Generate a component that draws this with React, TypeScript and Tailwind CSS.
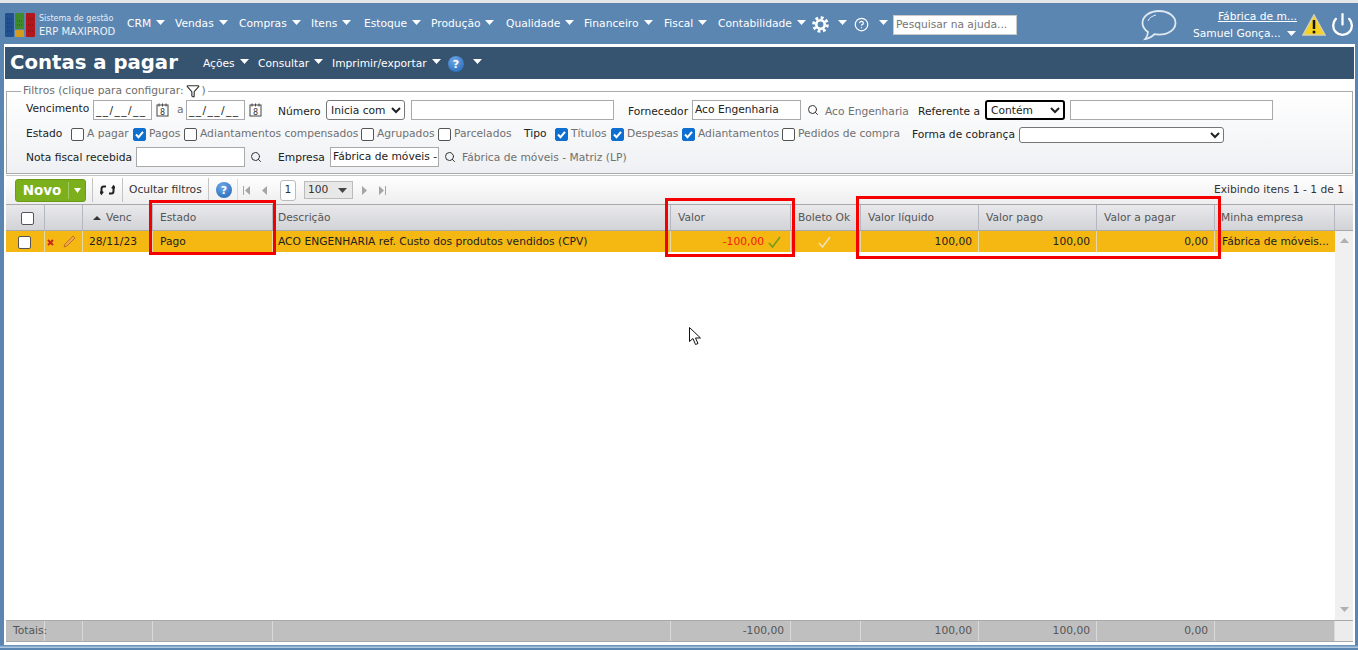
import { CircleHelp, Filter, Power, Search } from 'lucide-react'

const menus = [
  { label: 'CRM', w: 'w-[48px]' },
  { label: 'Vendas', w: 'w-[64px]' },
  { label: 'Compras', w: 'w-[72px]' },
  { label: 'Itens', w: 'w-[53px]' },
  { label: 'Estoque', w: 'w-[67px]' },
  { label: 'Produção', w: 'w-[75px]' },
  { label: 'Qualidade', w: 'w-[78px]' },
  { label: 'Financeiro', w: 'w-[80px]' },
  { label: 'Fiscal', w: 'w-[54px]' },
  { label: 'Contabilidade', w: 'w-[94px]' },
]

const columns = [
  { label: '', w: 'w-[39px]' },
  { label: '', w: 'w-[38px]' },
  { label: 'Venc', w: 'w-[70px]' },
  { label: 'Estado', w: 'w-[120px]' },
  { label: 'Descrição', w: 'w-[398px]' },
  { label: 'Valor', w: 'w-[120px]' },
  { label: 'Boleto Ok', w: 'w-[70px]' },
  { label: 'Valor líquido', w: 'w-[118px]' },
  { label: 'Valor pago', w: 'w-[118px]' },
  { label: 'Valor a pagar', w: 'w-[118px]' },
  { label: 'Minha empresa', w: 'w-[120px]' },
]

function Caret({ className = 'ml-[5px] -mt-[4px]' }: { className?: string }) {
  return (
    <svg width="9" height="5" viewBox="0 0 9 5" className={`shrink-0 ${className}`}>
      <polygon points="0,0 9,0 4.5,5" fill="#fff" />
    </svg>
  )
}

function CalendarIcon() {
  return (
    <svg width="13" height="14" viewBox="0 0 13 14" className="shrink-0">
      <rect x="1" y="2" width="11" height="11" fill="#fff" stroke="#444" />
      <path d="M3 0.5v3M6.5 0.5v3M10 0.5v3" stroke="#444" />
      <text x="6.5" y="11.5" fontSize="8" textAnchor="middle" fill="#333" fontFamily="DejaVu Sans">8</text>
    </svg>
  )
}

function Check({ checked, label, w }: { checked?: boolean; label: string; w: string }) {
  return (
    <label className={`flex items-center shrink-0 ${w}`}>
      <span className={`flex items-center justify-center w-[13px] h-[13px] rounded-[2px] shrink-0 border ${checked ? 'bg-[#0f6fd1] border-[#0f6fd1]' : 'bg-white border-[#555]'}`}>
        {checked && (
          <svg width="11" height="11" viewBox="0 0 11 11">
            <path d="M2 5.5 4.5 8.2 9 2.8" fill="none" stroke="#fff" strokeWidth="2" />
          </svg>
        )}
      </span>
      <span className="ml-[3px] text-[#707070] whitespace-nowrap">{label}</span>
    </label>
  )
}

function Lens({ className = '' }: { className?: string }) {
  return <Search size={12} strokeWidth={2} className={`shrink-0 text-[#333] ${className}`} />
}

function Logo() {
  return (
    <svg width="30" height="24" viewBox="0 0 30 24" className="shrink-0">
      <rect x="0" y="0" width="9" height="24" rx="1" fill="#23508f" />
      <rect x="10" y="0" width="9" height="16" rx="1" fill="#3f8a2b" />
      <rect x="10" y="17" width="9" height="7" rx="1" fill="#d39a1d" />
      <rect x="21" y="0" width="9" height="24" rx="1" fill="#b3171b" />
      <path d="M2 6h5M2 10h5M2 14h5M2 18h5M12 8h5M12 12h5M23 6h5M23 12h5M23 18h5" stroke="#000" strokeOpacity=".3" strokeWidth="1" strokeDasharray="1 1" />
    </svg>
  )
}

function GearIcon() {
  return (
    <svg width="17" height="17" viewBox="0 0 17 17" fill="none" stroke="#fff" className="shrink-0">
      <circle cx="8.5" cy="8.5" r="4.2" strokeWidth="2.600" />
      <circle cx="8.5" cy="8.5" r="6.800" strokeWidth="3" strokeDasharray="2.800 2.540" />
    </svg>
  )
}

function HelpBall() {
  return (
    <span className="flex items-center justify-center w-[16px] h-[16px] rounded-full shrink-0 bg-[radial-gradient(circle_at_40%_30%,#6fa8e8,#1c62b3)] text-white font-bold text-[11px] leading-none">?</span>
  )
}

function PagerArrow({ dir, bar }: { dir: 'l' | 'r'; bar?: boolean }) {
  return (
    <svg width="8" height="9" viewBox="0 0 8 9" className="shrink-0">
      {dir === 'l' ? <polygon points="7,0 7,9 2,4.5" fill="#a5a5a5" /> : <polygon points="1,0 1,9 6,4.5" fill="#a5a5a5" />}
      {bar && <rect x={dir === 'l' ? 0 : 7} y="0" width="1" height="9" fill="#a5a5a5" />}
    </svg>
  )
}

function TopBar() {
  return (
    <div className="flex items-center h-[41px] pl-[5px] pr-[5px] pt-[2px] shrink-0">
      <Logo />
      <div className="ml-[4px] w-[88px] shrink-0 leading-[13px] whitespace-nowrap">
        <div className="text-[8px] text-[#e8eef5]">Sistema de gestão</div>
        <div className="text-[10px] text-[#eef3f8]">ERP MAXIPROD</div>
      </div>
      {menus.map((m) => (
        <div key={m.label} className={`flex items-center shrink-0 ${m.w} text-white`}>
          <span className="whitespace-nowrap">{m.label}</span>
          <Caret />
        </div>
      ))}
      <GearIcon />
      <Caret className="ml-[9px] -mt-[5px]" />
      <CircleHelp size={15} className="text-white shrink-0 ml-[7px]" />
      <Caret className="ml-[10px] -mt-[5px]" />
      <div className="ml-[5px] w-[124px] h-[20px] shrink-0 bg-white border border-[#c9c9c9] px-[2px] leading-[18px] text-[#757575] whitespace-nowrap">Pesquisar na ajuda...</div>
      <svg width="36" height="32" viewBox="0 0 36 32" fill="none" stroke="#dfe8f1" strokeWidth="1.8" className="ml-[124px] shrink-0">
        <path d="M18 2C8.5 2 1.5 7.5 1.5 14c0 3.6 2.2 6.8 5.5 9-.2 2.4-1 5-2.8 7 3.6-.4 7-2.4 9.200-4.800 1.400.3 3 .4 4.600.4 9.500 0 16.500-5.100 16.500-11.600S27.500 2 18 2Z" />
        <path d="M7 12c1-3 4-5 8-6" strokeWidth="1" />
      </svg>
      <div className="ml-[16px] w-[105px] shrink-0 text-white leading-[17px] text-right">
        <div className="underline pr-[1px] whitespace-nowrap">Fábrica de m...</div>
        <div className="flex items-center whitespace-nowrap">
          <span>Samuel Gonça...</span>
          <Caret className="ml-[6px]" />
        </div>
      </div>
      <svg width="24" height="22" viewBox="0 0 24 22" className="ml-[4px] shrink-0">
        <polygon points="12,1 23,21 1,21" fill="#f4d21f" stroke="#d8d0b0" strokeWidth="1.500" />
        <path d="M12 6v9" stroke="#111" strokeWidth="2.500" />
        <circle cx="12" cy="18" r="1.500" fill="#111" />
      </svg>
      <Power size={25} strokeWidth={2.2} className="text-white shrink-0 ml-[4px]" />
    </div>
  )
}

function TitleBar() {
  return (
    <div className="flex items-center h-[32px] bg-[#36536f] shrink-0 text-white pl-[5px] pt-[2px]">
      <span className="w-[193px] shrink-0 text-[19.7px] font-bold whitespace-nowrap -mt-[3px]">Contas a pagar</span>
      <div className="flex items-center w-[55px] shrink-0"><span>Ações</span><Caret /></div>
      <div className="flex items-center w-[74px] shrink-0"><span>Consultar</span><Caret /></div>
      <div className="flex items-center w-[116px] shrink-0 whitespace-nowrap"><span>Imprimir/exportar</span><Caret /></div>
      <HelpBall />
      <Caret className="ml-[9px] -mt-[5px]" />
    </div>
  )
}

function Filters() {
  return (
    <fieldset className="mx-[1px] mt-[5px] h-[90px] border border-[#a9a9a9] bg-gradient-to-b from-white to-[#eef0f3] text-[#222] shrink-0 relative">
      <legend className="ml-[14px] px-[2px] flex items-center text-[#6d6d6d] leading-[12px] whitespace-nowrap">
        Filtros (clique para configurar:
        <Filter size={14} className="text-[#333] mx-[2px]" />
        )
      </legend>
      <div className="pl-[19px]">
        <div className="flex items-center h-[24px]">
          <span className="w-[67px] shrink-0 -mt-[2px]">Vencimento</span>
          <div className="w-[59px] h-[20px] shrink-0 bg-white border border-[#a9a9a9] px-[2px] leading-[20px] tracking-[1.4px] whitespace-nowrap overflow-hidden">__/__/__</div>
          <div className="ml-[4px] w-[21px] shrink-0"><CalendarIcon /></div>
          <span className="w-[9px] shrink-0 text-[#707070]">a</span>
          <div className="w-[59px] h-[20px] shrink-0 bg-white border border-[#a9a9a9] px-[2px] leading-[20px] tracking-[1.4px] whitespace-nowrap overflow-hidden">__/__/__</div>
          <div className="ml-[4px] w-[29px] shrink-0"><CalendarIcon /></div>
          <span className="w-[48px] shrink-0 mt-[4px]">Número</span>
          <select defaultValue="Inicia com" className="w-[79px] h-[20px] shrink-0 bg-white border border-[#767676] rounded-[3px] appearance-auto">
            <option>Inicia com</option>
          </select>
          <div className="ml-[6px] w-[203px] h-[20px] shrink-0 bg-white border border-[#a9a9a9]" />
          <span className="ml-[14px] w-[64px] shrink-0 mt-[4px]">Fornecedor</span>
          <div className="w-[109px] h-[20px] shrink-0 bg-white border border-[#a9a9a9] px-[2px] leading-[17px]">Aco Engenharia</div>
          <Lens className="ml-[6px]" />
          <span className="ml-[6px] w-[93px] shrink-0 text-[#707070] mt-[4px] whitespace-nowrap">Aco Engenharia</span>
          <span className="w-[67px] shrink-0 mt-[4px] whitespace-nowrap">Referente a</span>
          <select defaultValue="Contém" className="w-[80px] h-[20px] shrink-0 bg-white border-2 border-black rounded-[3px] appearance-auto">
            <option>Contém</option>
          </select>
          <div className="ml-[5px] w-[203px] h-[20px] shrink-0 bg-white border border-[#a9a9a9]" />
        </div>
        <div className="flex items-center h-[24px] pt-[1px]">
          <span className="w-[45px] shrink-0">Estado</span>
          <Check label="A pagar" w="w-[62px]" />
          <Check checked label="Pagos" w="w-[51px]" />
          <Check label="Adiantamentos compensados" w="w-[177px]" />
          <Check label="Agrupados" w="w-[77px]" />
          <Check label="Parcelados" w="w-[86px]" />
          <span className="w-[31px] shrink-0">Tipo</span>
          <Check checked label="Títulos" w="w-[56px]" />
          <Check checked label="Despesas" w="w-[71px]" />
          <Check checked label="Adiantamentos" w="w-[100px]" />
          <Check label="Pedidos de compra" w="w-[130px]" />
          <span className="w-[107px] shrink-0 mt-[2px] whitespace-nowrap">Forma de cobrança</span>
          <select defaultValue="" className="w-[205px] h-[16px] shrink-0 bg-white border border-[#767676] rounded-[3px] appearance-auto">
            <option value=""></option>
          </select>
        </div>
        <div className="flex items-center h-[24px] -mt-[1px]">
          <span className="w-[110px] shrink-0 mt-[2px] whitespace-nowrap">Nota fiscal recebida</span>
          <div className="w-[109px] h-[20px] shrink-0 bg-white border border-[#a9a9a9]" />
          <Lens className="ml-[5px]" />
          <span className="ml-[16px] w-[52px] shrink-0 mt-[2px]">Empresa</span>
          <div className="w-[109px] h-[20px] shrink-0 bg-white border border-[#a9a9a9] px-[2px] leading-[17px] whitespace-nowrap overflow-hidden">Fábrica de móveis -</div>
          <Lens className="ml-[5px]" />
          <span className="ml-[6px] text-[#707070] mt-[2px] whitespace-nowrap">Fábrica de móveis - Matriz (LP)</span>
        </div>
      </div>
    </fieldset>
  )
}

function Toolbar() {
  return (
    <div className="flex items-center h-[29px] mt-[1px] mx-[1px] pl-[9px] pr-[9px] border-t border-[#c4c4c4] bg-gradient-to-b from-white to-[#eeeeee] text-[#333] shrink-0">
      <div className="flex items-center w-[71px] h-[23px] shrink-0 rounded-[3px] bg-[#7bb01c] border border-[#6b9a18] text-white font-bold text-[13.5px]">
        <span className="w-[52px] text-center">Novo</span>
        <span className="w-[1px] h-[17px] bg-[#a3c964]" />
        <svg width="7" height="5" viewBox="0 0 7 5" className="ml-[5px]"><polygon points="0,0 7,0 3.500,5" fill="#fff" /></svg>
      </div>
      <span className="ml-[6px] w-[1px] h-[24px] bg-[#c4c4c4] shrink-0" />
      <svg width="15" height="12" viewBox="0 0 15 12" fill="none" stroke="#222" strokeWidth="2" className="ml-[7px] shrink-0">
        <path d="M6 2.500H3.500C2 2.500 1.500 3.500 1.500 5v4M0 7.500l1.500 2 1.500-2" />
        <path d="M9 9.500h2.500c1.500 0 2-1 2-2.500V3M12 4.500l1.500-2 1.500 2" />
      </svg>
      <span className="ml-[7px] w-[1px] h-[24px] bg-[#c4c4c4] shrink-0" />
      <span className="ml-[6px] w-[79px] shrink-0 whitespace-nowrap">Ocultar filtros</span>
      <span className="w-[1px] h-[24px] bg-[#c4c4c4] shrink-0" />
      <span className="ml-[7px]"><HelpBall /></span>
      <span className="w-[1px] h-[22px] ml-[5px] bg-[#d8d8d8] shrink-0" />
      <span className="ml-[5px] flex items-center gap-[9px]">
        <PagerArrow dir="l" bar />
        <PagerArrow dir="l" />
      </span>
      <span className="ml-[12px] flex items-center justify-center w-[16px] h-[21px] shrink-0 bg-white border border-[#bbb] rounded-[3px]">1</span>
      <div className="ml-[8px] flex items-center justify-between w-[49px] h-[18px] shrink-0 border border-[#bbb] bg-[#e8e8e8] pl-[3px] pr-[5px]">
        <span>100</span>
        <svg width="9" height="5" viewBox="0 0 9 5"><polygon points="0,0 9,0 4.500,5" fill="#444" /></svg>
      </div>
      <span className="ml-[8px] flex items-center gap-[9px]">
        <PagerArrow dir="r" />
        <PagerArrow dir="r" bar />
      </span>
      <span className="ml-auto whitespace-nowrap">Exibindo itens 1 - 1 de 1</span>
    </div>
  )
}

function HeaderRow() {
  return (
    <div className="flex h-[27px] mx-[1px] border-t border-b border-[#a9a9a9] bg-gradient-to-b from-[#e9e9ec] to-[#d2d3d7] text-[#555] shrink-0">
      {columns.map((c, i) => (
        <div key={i} className={`flex items-center shrink-0 pt-[1px] border-r border-[#b4b8c0] ${c.w} ${i === 2 ? 'pl-[10px]' : i === 4 ? 'pl-[5px]' : i === 10 ? 'pl-[6px]' : 'pl-[7px]'}`}>
          {i === 0 && <span className="ml-[8px] w-[13px] h-[13px] bg-white border border-[#555] rounded-[2px]" />}
          {i === 2 && (
            <svg width="8" height="4" viewBox="0 0 8 4" className="mr-[5px]"><polygon points="4,0 8,4 0,4" fill="#333" /></svg>
          )}
          <span className="whitespace-nowrap">{c.label}</span>
        </div>
      ))}
      <div className="flex-1" />
    </div>
  )
}

function DataRow() {
  const cell = 'flex items-center shrink-0 pt-[1px] border-r border-[#e6d8a8]'
  return (
    <div className="flex h-[21px] bg-[#f5b813] text-[#222]">
      <div className={`${cell} w-[39px] pl-[12px]`}>
        <span className="w-[13px] h-[13px] bg-white border border-[#555] rounded-[2px]" />
      </div>
      <div className={`${cell} w-[38px] pl-[2px] gap-[8px]`}>
        <svg width="7" height="7" viewBox="0 0 7 7"><path d="M1 1l5 5M6 1 1 6" stroke="#c7281a" strokeWidth="2" /></svg>
        <svg width="14" height="14" viewBox="0 0 14 14" fill="none"><path d="M2 12 3 9l8-8 2 2-8 8Z" fill="#f0a64c" stroke="#b5651d" strokeWidth=".8" /></svg>
      </div>
      <div className={`${cell} w-[70px] pl-[6px]`}>28/11/23</div>
      <div className={`${cell} w-[120px] pl-[7px]`}>Pago</div>
      <div className={`${cell} w-[398px] pl-[5px] whitespace-nowrap`}>ACO ENGENHARIA ref. Custo dos produtos vendidos (CPV)</div>
      <div className={`${cell} w-[120px] justify-end pr-[9px] text-[#f01a10]`}>
        <span>-100,00</span>
        <svg width="13" height="12" viewBox="0 0 13 12" fill="none" className="ml-[4px]"><path d="M1 7l3.500 4L12 1" stroke="#6e9f1d" strokeWidth="1.600" /></svg>
      </div>
      <div className={`${cell} w-[70px] justify-center pr-[3px]`}>
        <svg width="13" height="12" viewBox="0 0 13 12" fill="none"><path d="M1 7l3.500 4L12 1" stroke="#ece4c8" strokeWidth="1.400" /></svg>
      </div>
      <div className={`${cell} w-[118px] justify-end pr-[6px]`}>100,00</div>
      <div className={`${cell} w-[118px] justify-end pr-[6px]`}>100,00</div>
      <div className={`${cell} w-[118px] justify-end pr-[6px]`}>0,00</div>
      <div className="flex items-center w-[120px] pl-[7px] pt-[1px] whitespace-nowrap">Fábrica de móveis...</div>
    </div>
  )
}

function TotalsRow() {
  const values = ['Totais:', '', '', '', '', '-100,00', '', '100,00', '100,00', '0,00', '']
  return (
    <div className="flex h-[20px] mx-[1px] mb-[3px] border-t border-b border-[#a9a9a9] bg-[#bfbfbf] text-[#555] shrink-0 box-content">
      {columns.map((c, i) => (
        <div key={i} className={`flex items-center shrink-0 border-r border-[#d9d9d9] whitespace-nowrap ${c.w} ${i === 0 ? 'pl-[7px]' : 'justify-end pr-[6px]'}`}>
          {values[i]}
        </div>
      ))}
      <div className="flex-1 bg-[#ececec]" />
    </div>
  )
}

export default function App() {
  return (
    <div className="relative h-[650px] w-full overflow-hidden bg-[#5b86b2] border-t-[3px] border-[#e4e6e8] font-['DejaVu_Sans',sans-serif] text-[10.7px] flex flex-col">
      <TopBar />
      <div className="flex flex-col h-[601px] mx-[4px] bg-white border-t-[3px] border-x border-b-0 border-white w-[1351px] shrink-0">
        <TitleBar />
        <Filters />
        <Toolbar />
        <HeaderRow />
        <div className="flex-1 min-h-0 flex mx-[1px]">
          <div className="w-[1329px] shrink-0">
            <DataRow />
          </div>
          <div className="flex-1 bg-[#f0f0f0] flex flex-col items-center justify-between pt-[7px] pb-[8px]">
            <svg width="9" height="5" viewBox="0 0 9 5"><polygon points="4.500,0 9,5 0,5" fill="#b0b0b0" /></svg>
            <svg width="9" height="5" viewBox="0 0 9 5"><polygon points="0,0 9,0 4.500,5" fill="#b0b0b0" /></svg>
          </div>
        </div>
        <TotalsRow />
      </div>
      <div className="h-[3px] shrink-0 bg-gradient-to-b from-[#5b86b2] to-[#bcd4e8]" />

      {/* marcações em vermelho sobre a tabela */}
      <div className="absolute left-[149px] top-[197px] w-[127px] h-[55px] border-[3px] border-[#f40000]" />
      <div className="absolute left-[665px] top-[195px] w-[130px] h-[59px] border-[3px] border-[#f40000]" />
      <div className="absolute left-[856px] top-[193px] w-[365px] h-[63px] border-[3px] border-[#f40000]" />

      {/* cursor do mouse */}
      <svg width="13" height="19" viewBox="0 0 13 19" className="absolute left-[689px] top-[324px]">
        <path d="M.5.5v14l3.500-3 2.500 6 2.500-1-2.500-5.500h5Z" fill="#fff" stroke="#111" />
      </svg>
    </div>
  )
}
